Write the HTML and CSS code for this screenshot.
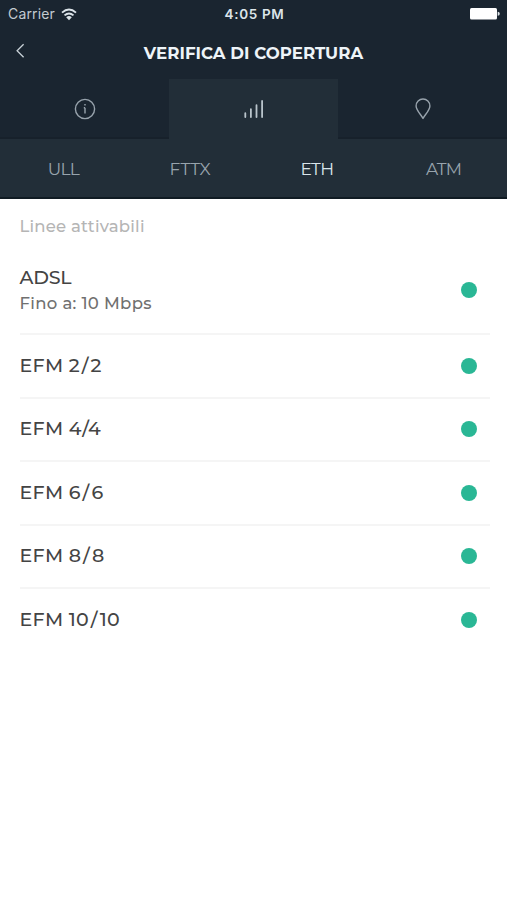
FILE: index.html
```html
<!DOCTYPE html>
<html lang="it">
<head>
<meta charset="utf-8">
<title>Verifica di copertura</title>
<link rel="stylesheet" href="styles.css">
</head>
<body>
<header class="top">
  <div class="status">
    <div class="carrier"><span class="carrier-name">Carrier</span>
      <svg class="wifi" width="16" height="13" viewBox="0 0 16 13"><g fill="none" stroke="currentColor" stroke-width="1.9"><path d="M1 4.6Q8-1.6 15 4.6"/><path d="M3.5 7.4Q8 3.4 12.5 7.4"/></g><path d="M5.2 9.2Q8 6.9 10.8 9.2L8 12.2Z" fill="currentColor"/></svg>
    </div>
    <span class="time">4:05 PM</span>
    <svg class="battery" width="31" height="14" viewBox="0 0 31 14"><rect x="1" y="1" width="27" height="11.6" rx="1.5" fill="#fff"/><path d="M28.7 4.8Q30.8 5 30.8 6.8T28.7 8.8Z" fill="#dce2e6"/></svg>
  </div>
  <div class="navbar">
    <svg class="back" width="10" height="16" viewBox="0 0 10 16"><path d="M8.6 1.3L2.1 7.8L8.6 14.3" fill="none" stroke="currentColor" stroke-width="1.3"/></svg>
    <h1 class="title">VERIFICA DI COPERTURA</h1>
    <span></span>
  </div>
  <nav class="tabs">
    <a class="tab"><svg width="22" height="22" viewBox="0 0 22 22" fill="none" stroke="currentColor" stroke-width="1.4"><circle cx="11" cy="11" r="9.6"/><path d="M11 9.8V15.5M9.8 9.8H11M11 6V7.4"/></svg></a>
    <a class="tab active"><svg width="22" height="22" viewBox="0 0 22 22" fill="none" stroke="currentColor" stroke-width="1.8" stroke-linecap="round"><path d="M2.3 15.2V19M7.9 11.2V19M13.5 7.2V19M19.1 3V19"/></svg></a>
    <a class="tab"><svg width="22" height="22" viewBox="0 0 22 22" fill="none" stroke="currentColor" stroke-width="1.4" stroke-linejoin="round"><path d="M11 20.4C9 16.7 4.1 12 4.1 7.9A6.9 6.9 0 0 1 17.9 7.9C17.9 12 13 16.7 11 20.4Z"/></svg></a>
  </nav>
  <nav class="subtabs">
    <a class="sub">ULL</a><a class="sub fttx">FTTX</a><a class="sub on">ETH</a><a class="sub">ATM</a>
  </nav>
</header>
<main class="content">
  <h2 class="heading">Linee attivabili</h2>
  <ul class="list">
    <li class="row first"><div><div class="name adsl">ADSL</div><div class="detail">Fino a: 10 Mbps</div></div><i class="dot"></i></li>
    <li class="row"><div class="name">EFM 2<span class="slash">/</span>2</div><i class="dot"></i></li>
    <li class="row"><div class="name">EFM 4/4</div><i class="dot"></i></li>
    <li class="row"><div class="name">EFM 6<span class="slash">/</span>6</div><i class="dot"></i></li>
    <li class="row"><div class="name">EFM 8<span class="slash">/</span>8</div><i class="dot"></i></li>
    <li class="row"><div class="name">EFM 10<span class="slash">/</span>10</div><i class="dot"></i></li>
  </ul>
</main>
</body>
</html>
```
FILE: styles.css
```css
* { box-sizing: border-box; }
body { margin: 0; min-height: 900px; background: #fff; font-family: Montserrat, Inter, sans-serif; overflow: hidden; }
.top { background: #1a2530; color: #fff; }
.status { display: grid; grid-template-columns: 1fr auto 1fr; align-items: center; height: 27px; padding: 0 7px 0 8px; color: #dce4e9; }
.carrier { display: flex; align-items: center; gap: 6px; }
.carrier-name { font: 400 14px/28px Inter, sans-serif; letter-spacing: .15px; color: #c3cbd1; }
.time { font: 600 13.5px/28px Inter, sans-serif; letter-spacing: .65px; padding-left: 1px; }
.battery { justify-self: end; }
.navbar { display: grid; grid-template-columns: 1fr auto 1fr; align-items: center; height: 52px; padding: 0 15px; }
.back { color: #c9d2d8; margin-top: -4px; }
.title { margin: 0; font-size: 16.6px; font-weight: 700; line-height: 50px; letter-spacing: .03px; color: #eef4f8; }
.tabs { display: grid; grid-template-columns: repeat(3, 1fr); height: 60px; }
.tab { display: flex; align-items: center; justify-content: center; padding-top: 2px; border-bottom: 2px solid #17212b; color: #98a3ac; }
.tab.active { background: #222e38; border-color: #222e38; color: #b9c4cb; }
.subtabs { display: grid; grid-template-columns: repeat(4, 1fr); height: 60px; background: #222e38; border-bottom: 2px solid #101b23; }
.sub { text-align: center; font-size: 17px; line-height: 60px; color: #98a4ad; letter-spacing: -.7px; }
.sub.fttx { letter-spacing: 0; }
.sub.on { color: #dae5eb; }
.content { padding: 15px 17px 0 19.5px; }
.heading { margin: 0; font-size: 16.5px; font-weight: 500; line-height: 24px; color: #b5b5b5; letter-spacing: .2px; }
.list { list-style: none; margin: 0; padding: 0; }
.row { display: flex; align-items: center; justify-content: space-between; height: 63.5px; padding-right: 13px; border-bottom: 2px solid #f5f5f5; }
.row:last-child { height: 62.5px; border-bottom: 0; }
.row.first { height: 97px; padding-top: 8px; }
.name { font-size: 19px; font-weight: 500; line-height: 26px; color: #444; letter-spacing: .3px; }
.name.adsl { letter-spacing: -.2px; }
.slash { margin: 0 1.8px; }
.detail { font-size: 16.5px; font-weight: 500; line-height: 24px; color: #707070; letter-spacing: .33px; }
.dot { width: 16px; height: 16px; border-radius: 50%; background: #2ab795; }
```
